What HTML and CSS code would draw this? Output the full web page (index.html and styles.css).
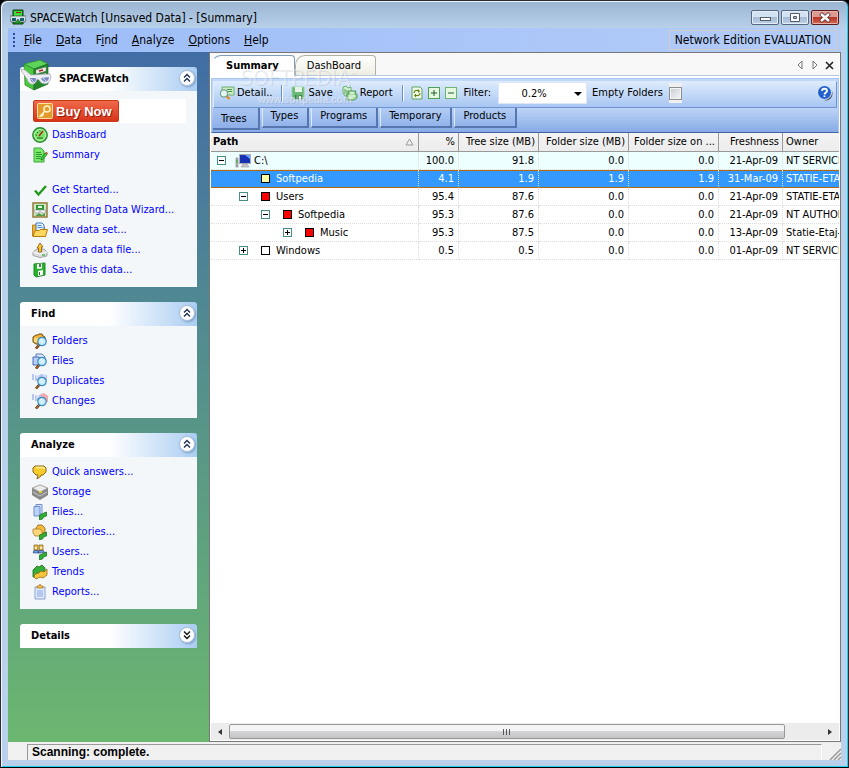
FILE: index.html
```html
<!DOCTYPE html>
<html lang="en">

<head>
    <meta charset="UTF-8">
    <title>SPACEWatch</title>
    <link rel="stylesheet" href="styles.css">
</head>

<body>
    <!-- Icons -->
    <svg class="sprite" xmlns="http://www.w3.org/2000/svg">
        <symbol id="i-app" viewBox="0 0 16 16">
            <path d="M3 1h10v14H3z" fill="#1e9a24" stroke="#083c0a" />
            <path d="M4 2h8v5H4z" fill="#39e03c" />
            <path d="M6 3h5v1H6z" fill="#b01010" />
            <path d="M0 7h16v2l-1 4h-5L8 10l-2 3H1L0 9z" fill="#d6e4e8" stroke="#333" stroke-width=".6" />
            <path d="M2 9h4v3H2zM10 9h4v3h-4z" fill="#12626e" />
        </symbol>
        <symbol id="i-logo" viewBox="0 0 32 32">
            <path d="M4 5l16-4 8 4-14 5z" fill="#5ed45a" stroke="#2a8a2c" stroke-width=".7" />
            <path d="M4 5l10 5v21L5 26z" fill="#4cc93e" stroke="#2a8a2c" stroke-width=".7" />
            <path d="M14 10l14-5v20l-14 6z" fill="#24862a" stroke="#1a6a20" stroke-width=".7" />
            <path d="M16 11l10-3v4l-10 3zM16 17l10-3v4l-10 3z" fill="#eee" stroke="#888" stroke-width=".5" />
            <path d="M19 12l4-1M19 18l4-1" stroke="#c01818" stroke-width="1.500" />
            <path d="M1 10l4 1 6 5 19-1 1 3c-1 8-9 9-12 3l-2-1c-1 7-8 7-10 0L2 13z" fill="#eceef4" stroke="#a0a4b0" stroke-width=".7" />
            <path d="M10 19l6 0c0 6-5 6-6 0zM21 19l8-1c0 6-7 6-8 1z" fill="#7d89c4" />
            <path d="M11 20l3 3M23 19l3 3" stroke="#cfd6f5" />
        </symbol>
        <symbol id="i-key" viewBox="0 0 16 16">
            <rect x=".5" y=".5" width="15" height="15" rx="1" fill="#e39a2c" stroke="#ffe0a0" />
            <circle cx="10" cy="6" r="3" fill="none" stroke="#fff3c8" stroke-width="1.500" />
            <path d="M8 8l-5 5h2l1-1v-1h1" fill="none" stroke="#fff3c8" stroke-width="1.300" />
        </symbol>
        <symbol id="i-gauge" viewBox="0 0 16 16">
            <circle cx="8" cy="8" r="7.200" fill="#7be26a" stroke="#2b8a30" stroke-width="1.400" />
            <circle cx="8" cy="8" r="5.500" fill="#7be26a" stroke="#b8f5aa" />
            <path d="M7 9l4-5" stroke="#b02010" stroke-width="1.300" />
            <path d="M3.500 8h1.500M8 3.500v1M5 5l1 1M5 11h6" stroke="#0f6a1a" />
        </symbol>
        <symbol id="i-note" viewBox="0 0 16 16">
            <path d="M2 1h7l3 3v11H2z" fill="#7ce86a" stroke="#3aa53a" />
            <path d="M4 5.500h5M4 7.500h6M4 9.500h5M4 11.500h4" stroke="#2b9a30" />
            <path d="M9 11l4-5 2 1.500-4 5-2 .5z" fill="#3cc23c" stroke="#1a7a24" stroke-width=".7" />
            <path d="M13 6l1-1 2 1-1 1.500z" fill="#b04a18" />
        </symbol>
        <symbol id="i-check" viewBox="0 0 16 16">
            <path d="M3 8.500l3.500 4L14 4" fill="none" stroke="#229a1c" stroke-width="2.400" />
        </symbol>
        <symbol id="i-wizard" viewBox="0 0 16 16">
            <rect x="1" y="1" width="14" height="14" fill="#cfe6c8" stroke="#9c8240" stroke-width="1.600" />
            <path d="M4 3h8v6H4z" fill="#2f9a34" />
            <path d="M6 4h4v2H6z" fill="#e8f4e8" />
            <path d="M2 8h12l-1 3h-3L8 9l-2 2H3z" fill="#f4f4f8" stroke="#8a8ea0" stroke-width=".6" />
            <path d="M3 14l4-3 3 2 3-2v3z" fill="#5a9a4e" />
        </symbol>
        <symbol id="i-newset" viewBox="0 0 16 16">
            <path d="M.5 3h4l1 2h7v9h-12z" fill="#f3b32e" stroke="#c08418" />
            <path d="M4 1h6l2 2v6H4z" fill="#e6f2ff" stroke="#3f7dbd" />
            <path d="M5.500 3.500h4M5.500 5.500h5" stroke="#4f92d0" />
            <path d="M1 14.500l2-6h4l1-1h7.500l-2 7z" fill="#ffd65e" stroke="#b87a10" />
        </symbol>
        <symbol id="i-opendata" viewBox="0 0 16 16">
            <path d="M1 10l4-3h7l3 3v4l-7 1.500-7-2z" fill="#dcdcdc" stroke="#a4a4a4" />
            <path d="M1 10l7 2 7-2" fill="none" stroke="#fff" />
            <path d="M6.500 10V6H5l3-5 3 4H9.500v5z" fill="#fbc531" stroke="#80560a" stroke-width=".8" />
            <path d="M10 13h3" stroke="#3db13a" stroke-width="1.300" />
        </symbol>
        <symbol id="i-savedata" viewBox="0 0 16 16">
            <path d="M2 2l11-1v12l-9 2-2-2z" fill="#29b32c" stroke="#1c8a22" />
            <path d="M5 2l5-.5v5L5 7z" fill="#f2f7f2" />
            <path d="M8 2v3" stroke="#0d6012" stroke-width="1.500" />
            <path d="M6 9l5-1v5l-5 1z" fill="#fff" />
            <path d="M7.500 10v3" stroke="#1b7a20" />
        </symbol>
        <symbol id="i-lens" viewBox="0 0 16 16">
            <path d="M7.500 11.500L4 15.500" stroke="#5c2c08" stroke-width="2.600" />
            <path d="M7.500 11.500L4 15.500" stroke="#d08a34" stroke-width="1" />
            <circle cx="10" cy="8.500" r="4.200" fill="#c4ecfb" stroke="#3a8cc0" stroke-width="1.200" />
            <path d="M8 7.500l2-1.200M9 10l2.500-2.500" stroke="#fff" />
        </symbol>
        <symbol id="i-findfolder" viewBox="0 0 16 16">
            <path d="M1 4l3-2h2l1-1h3l1 2 2 1v7H4L1 9z" fill="#f2b53a" stroke="#6e4a0c" />
            <path d="M2 5h5v4H2z" fill="#ffd978" />
            <use href="#i-lens" />
        </symbol>
        <symbol id="i-findfile" viewBox="0 0 16 16">
            <path d="M4 1h6l3 3v7H4z" fill="#dce9ff" stroke="#5b7cc0" />
            <path d="M1 4h6l2 2v6H1z" fill="#b7cdf7" stroke="#4a6bb4" />
            <use href="#i-lens" />
        </symbol>
        <symbol id="i-finddup" viewBox="0 0 16 16">
            <path d="M0 1h2v6H0zM3 2l3 1 3-2v7H3zM9 1l6 1v7H9z" fill="#b4c6f1" />
            <path d="M4 4h3M11 3h3" stroke="#e9f0ff" />
            <use href="#i-lens" />
        </symbol>
        <symbol id="i-findchg" viewBox="0 0 16 16">
            <path d="M0 1h2v6H0zM3 2l3 1 3-2v7H3z" fill="#b4c6f1" />
            <path d="M9 1l3-1 4 3v6H9z" fill="#f3a9ad" />
            <path d="M4 4h3" stroke="#e9f0ff" />
            <use href="#i-lens" />
        </symbol>
        <symbol id="i-bubble" viewBox="0 0 16 16">
            <path d="M3 2h9l2 2v4l-3 3H9v1l-4 3 1-4H4L1 8V4z" fill="#f8cb2c" stroke="#8c6814" />
            <path d="M4 3.500h7l2 1.500" fill="none" stroke="#fff0a0" stroke-width="1.500" />
        </symbol>
        <symbol id="i-storage" viewBox="0 0 16 16">
            <path d="M.5 4L8 1l7.500 3v7L8 15.500.5 11z" fill="#8a8a8a" stroke="#6c6c6c" stroke-width=".7" />
            <path d="M.5 4L8 1l7.500 3L8 8z" fill="#ececec" stroke="#aaa" stroke-width=".7" />
            <path d="M1 8l7 4 7-4" fill="none" stroke="#c8c8c8" />
            <path d="M7 7h3v2H7z" fill="#d4d820" />
        </symbol>
        <symbol id="i-chart" viewBox="0 0 16 16">
            <path d="M7.500 11l3-1 1-1 3-1v4l-3 1-1 2-3 1z" fill="#2fae2f" stroke="#166a1c" stroke-width=".7" />
        </symbol>
        <symbol id="i-files" viewBox="0 0 16 16">
            <path d="M4 .5h6V10H4z" fill="#d8e6ff" stroke="#6f8dcc" />
            <path d="M2 2.500h6V12H2z" fill="#bcd2fb" stroke="#6f8dcc" />
            <use href="#i-chart" />
        </symbol>
        <symbol id="i-dirs" viewBox="0 0 16 16">
            <path d="M4 4l2-3h4l3 3v5H4z" fill="#f5b93c" stroke="#8d6416" stroke-width=".8" />
            <path d="M1 5h7l2 2v5H3L1 9z" fill="#ffd778" stroke="#a8782a" stroke-width=".8" />
            <use href="#i-chart" />
        </symbol>
        <symbol id="i-users" viewBox="0 0 16 16">
            <path d="M1 9l1-3h4l1 3zM6 9l1-3h4l2 3z" fill="#6d95dd" stroke="#33497c" stroke-width=".6" />
            <path d="M2 1h4v5H2zM7 1h4v5H7z" fill="#f0c34c" stroke="#6d4a0c" stroke-width=".6" />
            <path d="M3 3h2v2H3zM8 3h2v2H8z" fill="#ffe9b8" />
            <use href="#i-chart" />
        </symbol>
        <symbol id="i-trends" viewBox="0 0 16 16">
            <path d="M1 6l4-4 2 1 3-2 3 3v6l-6 2-6 1z" fill="#35ad36" stroke="#176a1e" stroke-width=".8" />
            <path d="M3 10l4-1 2-2 3 1 3-3v6l-4 3-3-1-4 2-2-2z" fill="#f6c53c" stroke="#94690f" stroke-width=".8" />
        </symbol>
        <symbol id="i-reports" viewBox="0 0 16 16">
            <path d="M3 3h10v12H3z" fill="#dfe9fb" stroke="#8ba2d2" />
            <path d="M5 6h6v7H5z" fill="#b3c8f0" />
            <path d="M5 4V2h2l1-2 1 2h2v2z" fill="#f7c33e" stroke="#94650c" stroke-width=".6" />
        </symbol>
        <symbol id="i-detail" viewBox="0 0 16 16">
            <path d="M3 2h12v8H3z" fill="#cbe9c5" stroke="#6db070" />
            <path d="M8 4.500h5M8 6.500h5" stroke="#459a52" />
            <path d="M7.500 11l3 3" stroke="#e08a1c" stroke-width="2.400" />
            <circle cx="5" cy="8.500" r="3.700" fill="#e4f6f2" stroke="#5e8e78" />
        </symbol>
        <symbol id="i-save" viewBox="0 0 16 16">
            <path d="M2 2h12v12H4l-2-2z" fill="#67b974" stroke="#9bd0a2" />
            <path d="M5 2h7v5H5z" fill="#e8f3e8" />
            <path d="M5 10h7v4H5z" fill="#2e7e42" />
            <path d="M9 11h2v3H9z" fill="#fff" />
        </symbol>
        <symbol id="i-report" viewBox="0 0 16 16">
            <path d="M1 2l3-1 2 2 3-1v8l-6 1-2-3z" fill="#d4efcf" stroke="#6ab070" />
            <path d="M3 4v5M5 5v5" stroke="#4f9c56" />
            <path d="M6 6h8l-1 3h2v4l-3 2H5V9h2z" fill="#a6dba0" stroke="#559a5c" />
            <path d="M8 8h4M7 11h6M7 13h4" stroke="#fff" />
        </symbol>
        <symbol id="i-refresh" viewBox="0 0 12 14">
            <path d="M1 1h8l2 2v10H1z" fill="#edfbe8" stroke="#5da564" />
            <path d="M3 7c0-3 3-3 5-2M9 7c0 3-3 3-5 2" fill="none" stroke="#6a7d15" stroke-width="1.200" />
            <path d="M7 3l2 2-2 2zM5 7.500l-2 2 2 2z" fill="#6a7d15" />
        </symbol>
        <symbol id="i-expand" viewBox="0 0 12 12">
            <rect x=".5" y=".5" width="11" height="11" fill="#e6f8e0" stroke="#4da255" />
            <path d="M3 6h6M6 3v6" stroke="#1f5e2c" />
        </symbol>
        <symbol id="i-shrink" viewBox="0 0 12 12">
            <rect x=".5" y=".5" width="11" height="11" fill="#e6f8e0" stroke="#6cb573" />
            <path d="M3 6h6" stroke="#1f5e2c" />
        </symbol>
        <symbol id="i-help" viewBox="0 0 16 16">
            <circle cx="9" cy="9" r="6.500" fill="#444a5a" />
            <circle cx="7.500" cy="7.500" r="7" fill="#2260d0" stroke="#eaf2ff" />
            <path d="M5 6c0-3 5-3 5 0 0 1.500-2.500 1.500-2.500 3.500M7.500 10.500v1.500" fill="none" stroke="#fff" stroke-width="1.800" />
        </symbol>
        <symbol id="i-pc" viewBox="0 0 16 14">
            <path d="M1 4h2v9H1z" fill="#b4b8b8" stroke="#888" stroke-width=".7" />
            <path d="M2 6v3" stroke="#35b135" />
            <rect x="4.500" y=".5" width="11" height="9" fill="#1733b4" stroke="#a9adb8" />
            <path d="M10 1h5v4z" fill="#6fa2ff" />
            <path d="M8 10h4l2 3H6z" fill="#c8c8c8" stroke="#999" stroke-width=".6" />
        </symbol>
        <symbol id="i-up" viewBox="0 0 16 16">
            <circle cx="8" cy="8" r="7.500" fill="#fff" stroke="#a9bbd3" />
            <path d="M5 7.500l3-3 3 3M5 11.500l3-3 3 3" fill="none" stroke="#1d3050" stroke-width="1.400" />
        </symbol>
        <symbol id="i-down" viewBox="0 0 16 16">
            <circle cx="8" cy="8" r="7.500" fill="#fff" stroke="#a9bbd3" />
            <path d="M5 4.500l3 3 3-3M5 8.500l3 3 3-3" fill="none" stroke="#111" stroke-width="1.400" />
        </symbol>
    </svg>

    <div class="window">
        <!-- Title bar -->
        <header class="titlebar">
            <svg class="icon"><use href="#i-app" /></svg>
            <span class="title">SPACEWatch [Unsaved Data] - [Summary]</span>
            <div class="window-buttons">
                <button aria-label="Minimize"><svg viewBox="0 0 26 13"><rect x="8.500" y="6.500" width="10" height="3" fill="#fff" stroke="#555d6b" /></svg></button>
                <button aria-label="Maximize"><svg viewBox="0 0 26 13"><path d="M8.500 2.500h9v8h-9zM11.500 5.500h3v2h-3z" fill="#fff" fill-rule="evenodd" stroke="#555d6b" /></svg></button>
                <button class="close" aria-label="Close"><svg viewBox="0 0 26 13"><path d="M8.500 2.500l9 8M17.500 2.500l-9 8" stroke="#5a3030" stroke-width="4" /><path d="M9 3l8 7M17 3l-8 7" stroke="#fff" stroke-width="2.500" /></svg></button>
            </div>
        </header>

        <!-- Menu -->
        <nav class="menubar">
            <span class="grip"></span>
            <button><u>F</u>ile</button>
            <button><u>D</u>ata</button>
            <button>F<u>i</u>nd</button>
            <button><u>A</u>nalyze</button>
            <button><u>O</u>ptions</button>
            <button><u>H</u>elp</button>
            <span class="edition">Network Edition EVALUATION</span>
        </nav>

        <div class="content">
            <!-- Task panes -->
            <aside class="sidebar">
                <section class="panel">
                    <div class="panel-head with-logo">
                        <svg class="logo"><use href="#i-logo" /></svg>
                        <h2>SPACEWatch</h2>
                        <button aria-label="Collapse SPACEWatch"><svg class="icon"><use href="#i-up" /></svg></button>
                    </div>
                    <div class="panel-body first">
                        <div class="buy"><button><svg class="icon"><use href="#i-key" /></svg>Buy Now</button></div>
                        <ul>
                            <li><a href="#"><svg class="icon"><use href="#i-gauge" /></svg>DashBoard</a></li>
                            <li><a href="#"><svg class="icon"><use href="#i-note" /></svg>Summary</a></li>
                        </ul>
                        <ul class="spaced">
                            <li><a href="#"><svg class="icon"><use href="#i-check" /></svg>Get Started...</a></li>
                            <li><a href="#"><svg class="icon"><use href="#i-wizard" /></svg>Collecting Data Wizard...</a></li>
                            <li><a href="#"><svg class="icon"><use href="#i-newset" /></svg>New data set...</a></li>
                            <li><a href="#"><svg class="icon"><use href="#i-opendata" /></svg>Open a data file...</a></li>
                            <li><a href="#"><svg class="icon"><use href="#i-savedata" /></svg>Save this data...</a></li>
                        </ul>
                    </div>
                </section>

                <section class="panel">
                    <div class="panel-head">
                        <h2>Find</h2>
                        <button aria-label="Collapse Find"><svg class="icon"><use href="#i-up" /></svg></button>
                    </div>
                    <div class="panel-body">
                        <ul>
                            <li><a href="#"><svg class="icon"><use href="#i-findfolder" /></svg>Folders</a></li>
                            <li><a href="#"><svg class="icon"><use href="#i-findfile" /></svg>Files</a></li>
                            <li><a href="#"><svg class="icon"><use href="#i-finddup" /></svg>Duplicates</a></li>
                            <li><a href="#"><svg class="icon"><use href="#i-findchg" /></svg>Changes</a></li>
                        </ul>
                    </div>
                </section>

                <section class="panel">
                    <div class="panel-head">
                        <h2>Analyze</h2>
                        <button aria-label="Collapse Analyze"><svg class="icon"><use href="#i-up" /></svg></button>
                    </div>
                    <div class="panel-body">
                        <ul>
                            <li><a href="#"><svg class="icon"><use href="#i-bubble" /></svg>Quick answers...</a></li>
                            <li><a href="#"><svg class="icon"><use href="#i-storage" /></svg>Storage</a></li>
                            <li><a href="#"><svg class="icon"><use href="#i-files" /></svg>Files...</a></li>
                            <li><a href="#"><svg class="icon"><use href="#i-dirs" /></svg>Directories...</a></li>
                            <li><a href="#"><svg class="icon"><use href="#i-users" /></svg>Users...</a></li>
                            <li><a href="#"><svg class="icon"><use href="#i-trends" /></svg>Trends</a></li>
                            <li><a href="#"><svg class="icon"><use href="#i-reports" /></svg>Reports...</a></li>
                        </ul>
                    </div>
                </section>

                <section class="panel">
                    <div class="panel-head">
                        <h2>Details</h2>
                        <button aria-label="Expand Details"><svg class="icon"><use href="#i-down" /></svg></button>
                    </div>
                </section>
            </aside>

            <!-- Document area -->
            <main class="document">
                <div class="tabs">
                    <button class="tab active">Summary</button>
                    <button class="tab">DashBoard</button>
                    <div class="tab-nav">
                        <button aria-label="Previous tab"><svg viewBox="0 0 10 10"><path d="M7 1v8L3 5z" fill="none" stroke="#777" /></svg></button>
                        <button aria-label="Next tab"><svg viewBox="0 0 10 10"><path d="M3 1v8l4-4z" fill="none" stroke="#777" /></svg></button>
                        <button aria-label="Close tab"><svg viewBox="0 0 10 10"><path d="M1 2l7 7M8 2L1 9" stroke="#222" stroke-width="1.600" /></svg></button>
                    </div>
                </div>

                <div class="tools">
                    <div class="toolbar">
                        <button><svg class="icon"><use href="#i-detail" /></svg>Detail..</button>
                        <span class="sep"></span>
                        <button><svg class="icon"><use href="#i-save" /></svg>Save</button>
                        <button><svg class="icon"><use href="#i-report" /></svg>Report</button>
                        <span class="sep"></span>
                        <div class="small-buttons">
                            <button aria-label="Refresh"><svg class="page"><use href="#i-refresh" /></svg></button>
                            <button aria-label="Expand all"><svg><use href="#i-expand" /></svg></button>
                            <button aria-label="Collapse all"><svg><use href="#i-shrink" /></svg></button>
                        </div>
                        <label for="filter">Filter:</label>
                        <span class="combo">
                            <select id="filter">
                                <option>0.2%</option>
                            </select>
                        </span>
                        <label for="empty">Empty Folders</label>
                        <span class="check"><input type="checkbox" id="empty"></span>
                        <button class="help" aria-label="Help"><svg class="icon"><use href="#i-help" /></svg></button>
                    </div>
                    <div class="subtabs">
                        <button class="active">Trees</button>
                        <button>Types</button>
                        <button>Programs</button>
                        <button>Temporary</button>
                        <button>Products</button>
                    </div>
                    <div class="watermark" aria-hidden="true">
                        <span class="mark-name">SOFTPEDIA<sup>™</sup></span>
                        <span class="mark-url">www.softpedia.com</span>
                    </div>
                </div>

                <div class="grid">
                    <table>
                        <colgroup>
                            <col>
                            <col class="w-percent">
                            <col class="w-tree">
                            <col class="w-folder">
                            <col class="w-folder">
                            <col class="w-fresh">
                            <col class="w-owner">
                        </colgroup>
                        <thead>
                            <tr>
                                <th class="path"><div class="path-head">Path<svg viewBox="0 0 9 8"><path d="M1 7l3.500-6L8 7z" fill="none" stroke="#999" /></svg></div></th>
                                <th>%</th>
                                <th>Tree size (MB)</th>
                                <th>Folder size (MB)</th>
                                <th>Folder size on ...</th>
                                <th>Freshness</th>
                                <th class="owner">Owner</th>
                            </tr>
                        </thead>
                        <tbody>
                            <tr class="root">
                                <td class="path"><div class="node"><button class="toggle minus" aria-label="Collapse"></button><svg class="drive"><use href="#i-pc" /></svg>C:\</div></td>
                                <td>100.0</td>
                                <td>91.8</td>
                                <td>0.0</td>
                                <td>0.0</td>
                                <td>21-Apr-09</td>
                                <td class="owner">NT SERVICE</td>
                            </tr>
                            <tr class="selected">
                                <td class="path"><div class="node level-1"><span class="toggle-space"></span><span class="box cream"></span>Softpedia</div></td>
                                <td>4.1</td>
                                <td>1.9</td>
                                <td>1.9</td>
                                <td>1.9</td>
                                <td>31-Mar-09</td>
                                <td class="owner">STATIE-ETAJ</td>
                            </tr>
                            <tr>
                                <td class="path"><div class="node level-1"><button class="toggle minus" aria-label="Collapse"></button><span class="box red"></span>Users</div></td>
                                <td>95.4</td>
                                <td>87.6</td>
                                <td>0.0</td>
                                <td>0.0</td>
                                <td>21-Apr-09</td>
                                <td class="owner">STATIE-ETAJ</td>
                            </tr>
                            <tr>
                                <td class="path"><div class="node level-2"><button class="toggle minus" aria-label="Collapse"></button><span class="box red"></span>Softpedia</div></td>
                                <td>95.3</td>
                                <td>87.6</td>
                                <td>0.0</td>
                                <td>0.0</td>
                                <td>21-Apr-09</td>
                                <td class="owner">NT AUTHORITY</td>
                            </tr>
                            <tr>
                                <td class="path"><div class="node level-3"><button class="toggle plus" aria-label="Expand"></button><span class="box red"></span>Music</div></td>
                                <td>95.3</td>
                                <td>87.5</td>
                                <td>0.0</td>
                                <td>0.0</td>
                                <td>13-Apr-09</td>
                                <td class="owner">Statie-Etaj-1</td>
                            </tr>
                            <tr>
                                <td class="path"><div class="node level-1"><button class="toggle plus" aria-label="Expand"></button><span class="box"></span>Windows</div></td>
                                <td>0.5</td>
                                <td>0.5</td>
                                <td>0.0</td>
                                <td>0.0</td>
                                <td>01-Apr-09</td>
                                <td class="owner">NT SERVICE</td>
                            </tr>
                        </tbody>
                    </table>
                </div>

                <div class="scrollbar">
                    <button aria-label="Scroll left"><svg viewBox="0 0 8 8"><path d="M6 1v6L2 4z" fill="#333" /></svg></button>
                    <div class="track"><div class="thumb"></div></div>
                    <button aria-label="Scroll right"><svg viewBox="0 0 8 8"><path d="M2 1v6l4-3z" fill="#333" /></svg></button>
                </div>
            </main>
        </div>

        <!-- Status bar -->
        <footer class="statusbar">
            <span class="status">Scanning: complete.</span>
            <svg class="resize" viewBox="0 0 12 12"><path d="M1 12L12 1M5 12l7-7M9 12l3-3" stroke="#999" stroke-width="1.500" /></svg>
        </footer>
    </div>
</body>

</html>
```

FILE: styles.css
```css
* {
    box-sizing: border-box;
}

body {
    margin: 0;
    background: #000;
    color: #000;
    font-family: "DejaVu Sans Condensed", "DejaVu Sans", Tahoma, sans-serif;
    font-size: 11px;
    line-height: 16px;
}

button {
    padding: 0;
    border: none;
    background: none;
    color: inherit;
    font: inherit;
    white-space: nowrap;
}

ul {
    list-style: none;
    margin: 0;
    padding: 0;
}

svg {
    display: block;
    flex: none;
}

.sprite {
    display: none;
}

.icon {
    width: 16px;
    height: 16px;
}

/* Window frame */
.window {
    display: flex;
    flex-direction: column;
    height: 100vh;
    padding: 0 7px 7px 6px;
    border: 1px solid #2a2a33;
    border-bottom-color: #000;
    border-radius: 7px 7px 0 0;
    background: linear-gradient(#9ab4d2, #b9d1ea 28px);
    box-shadow: inset 1px 1px #f0f8ff, inset -1px -1px #1fd0ee;
}

.titlebar {
    display: flex;
    align-items: center;
    gap: 4px;
    height: 27px;
    padding: 5px 2px 0 3px;
    font-size: 12px;
}

.title {
    padding-top: 1px;
}

.window-buttons {
    display: flex;
    gap: 2px;
    margin-left: auto;
}

.window-buttons button {
    width: 28px;
    height: 15px;
    border: 1px solid #56677e;
    border-radius: 2px;
    background: linear-gradient(#d3e2f2 45%, #a6bcd5 50%, #bdd2e8);
    box-shadow: inset 0 0 0 1px #e4eefa;
}

.window-buttons .close {
    border-color: #5a1c20;
    background: linear-gradient(#dc9a90 45%, #b8372a 50%, #d2694f);
    box-shadow: inset 0 0 0 1px #e8b0a8;
}

/* Menu */
.menubar {
    display: flex;
    align-items: center;
    gap: 14px;
    height: 24px;
    margin-left: 1px;
    padding: 0 4px 0 5px;
    background: linear-gradient(90deg, #9dbdf8, #b4ccf8);
    font-size: 12px;
}

.grip {
    width: 2px;
    height: 14px;
    margin-right: -5px;
    background: repeating-linear-gradient(#2c4a94 0 2px, transparent 2px 4px);
}

.edition {
    margin-left: auto;
    padding: 1px 5px;
    border: 1px solid #cfcdc6;
    white-space: nowrap;
}

.content {
    display: flex;
    flex: 1;
    min-height: 0;
    margin-left: 1px;
}

/* Task panes */
.sidebar {
    display: flex;
    flex-direction: column;
    flex: none;
    gap: 15px;
    width: 201px;
    padding: 15px 12px;
    background: linear-gradient(#416da5, #4f8793 35%, #6bb76f);
}

.panel-head {
    display: flex;
    align-items: center;
    justify-content: space-between;
    height: 24px;
    padding: 0 2px 2px 11px;
    border-radius: 3px 3px 0 0;
    background: linear-gradient(90deg, #fff 50%, #aacdf2);
}

.panel-head button {
    border-radius: 50%;
    box-shadow: 1px 1px 2px #7c9cc4;
}

.with-logo {
    justify-content: flex-start;
    gap: 7px;
    padding-left: 0;
}

.with-logo button {
    margin-left: auto;
}

.logo {
    width: 32px;
    height: 32px;
    margin-top: -6px;
}

h2 {
    margin: 0;
    padding-top: 1px;
    font-size: 11px;
}

.panel-body {
    padding: 5px 11px 7px 12px;
    background: #f4f7fa;
}

.first {
    padding-top: 8px;
}

.spaced {
    margin-top: 15px;
}

.panel-body a {
    display: flex;
    align-items: center;
    gap: 4px;
    height: 20px;
    color: #00f;
    text-decoration: none;
    white-space: nowrap;
}

.buy {
    height: 24px;
    margin: 0 0 2px 1px;
    padding: 1px 0;
    background: #fff;
}

.buy button {
    display: flex;
    align-items: center;
    gap: 3px;
    height: 22px;
    padding: 0 6px 0 3px;
    border: 1px solid #c43a18;
    border-radius: 2px;
    background: linear-gradient(#f0694a, #d8351a);
    color: #fff;
    font: bold 13px "Liberation Sans", Arial, sans-serif;
    text-shadow: 1px 1px #9c1c08;
}

/* Document area */
.document {
    display: flex;
    flex-direction: column;
    flex: 1;
    min-width: 0;
    padding: 0 1px 1px;
    border: 1px solid #777;
    background: #fff;
}

.tabs {
    display: flex;
    align-items: flex-end;
    height: 23px;
    background: #f8f8f8;
    border-bottom: 1px solid #b8c8dc;
}

.tab {
    height: 20px;
    padding: 0 14px 0 11px;
    border: 1px solid #b0b0a4;
    border-bottom: none;
    border-radius: 10px 4px 0 0;
    background: linear-gradient(#fff, #eeede2);
}

.tab.active {
    height: 21px;
    margin-bottom: -1px;
    padding: 0 15px 0 14px;
    border-color: #7f9db9;
    border-left-color: transparent;
    background: #fff;
    font-weight: bold;
}

.tab-nav {
    display: flex;
    gap: 5px;
    margin-left: auto;
    padding: 0 4px 5px 0;
}

.tab-nav svg {
    width: 10px;
    height: 10px;
}

.tools {
    position: relative;
    margin-top: 2px;
    padding: 2px 1px 2px 1px;
    border: 1px solid #a9c6f4;
    border-bottom-color: #3f62a8;
    background: linear-gradient(#c2d8f8, #c2d8f8 50%, #87abe6);
}

.toolbar {
    display: flex;
    align-items: center;
    height: 27px;
    padding: 0 3px 3px 5px;
    border: 1px solid #dcebff;
    border-right-color: #6f93cf;
    border-bottom-color: #6f93cf;
    background: linear-gradient(#dcebfd, #a8c6f2);
}

.toolbar > button {
    display: flex;
    align-items: center;
    gap: 2px;
    margin-right: 9px;
}

.sep {
    width: 2px;
    height: 16px;
    margin-right: 7px;
    border-left: 1px solid #6a8ccb;
    border-right: 1px solid #fff;
}

.small-buttons {
    display: flex;
    align-items: center;
    gap: 5px;
    margin-right: 7px;
}

.small-buttons svg {
    width: 12px;
    height: 12px;
}

.small-buttons .page {
    height: 14px;
}

.combo {
    position: relative;
    margin: 0 5px 0 7px;
}

.combo::after {
    content: "";
    position: absolute;
    top: 10px;
    right: 5px;
    border: 4px solid transparent;
    border-top-color: #000;
    pointer-events: none;
}

select {
    display: block;
    width: 89px;
    height: 22px;
    padding: 2px 17px 0 0;
    border: 1px solid #dde6f4;
    border-radius: 0;
    background: #fff;
    color: #000;
    font: inherit;
    text-align: center;
    text-align-last: center;
    appearance: none;
}

.check {
    display: flex;
    align-items: center;
    height: 20px;
    margin-left: 6px;
    background: #f0f0f0;
}

.check input {
    width: 13px;
    height: 13px;
    margin: 0;
    border: 1px solid #8e8f8f;
    background: linear-gradient(135deg, #c8cdd4, #f6f6f6);
    box-shadow: inset 0 0 0 1px #f4f4f4;
    appearance: none;
}

.toolbar .help {
    margin: 0 0 0 auto;
}

.subtabs {
    display: flex;
    align-items: flex-start;
    gap: 2px;
    height: 22px;
}

.subtabs button {
    height: 20px;
    padding: 0 9px 2px 8px;
    border-right: 2px solid #5676b0;
    border-bottom: 2px solid #5676b0;
    border-left: 1px solid #dce9fc;
    background: linear-gradient(#b2cdf5, #92b2ea);
}

.subtabs .active {
    height: 22px;
    padding: 1px 11px 0 8px;
    border-left: none;
    background: linear-gradient(#a8c5f2, #8fafe8);
}

.watermark {
    position: absolute;
    top: -13px;
    left: 28px;
    display: flex;
    flex-direction: column;
    gap: 4px;
    color: rgba(255, 255, 255, 0.4);
    text-shadow: 1px 1px rgba(120, 130, 150, 0.2);
    pointer-events: none;
}

.mark-name {
    font-size: 22px;
    line-height: 24px;
}

.mark-name sup {
    font-size: 7px;
    line-height: 7px;
}

.mark-url {
    padding-left: 18px;
    font: bold 10px/12px "Liberation Sans", Arial, sans-serif;
}

/* Tree grid */
.grid {
    flex: 1;
    min-height: 0;
    overflow: hidden;
}

table {
    width: 100%;
    table-layout: fixed;
    border-collapse: separate;
    border-spacing: 0;
}

.w-percent {
    width: 40px;
}

.w-tree {
    width: 80px;
}

.w-folder {
    width: 90px;
}

.w-fresh {
    width: 64px;
}

.w-owner {
    width: 56px;
}

th,
td {
    height: 18px;
    padding: 0 4px 0 0;
    line-height: 16px;
    text-align: right;
    white-space: nowrap;
    overflow: hidden;
}

th {
    height: 19px;
    padding-right: 3px;
    border-right: 1px solid #999;
    border-bottom: 1px solid #999;
    background: linear-gradient(#f4f4f4, #ececec);
    font-weight: normal;
}

td {
    border-right: 1px dotted #ddd;
    border-bottom: 1px dotted #ddd;
}

th.path {
    padding-left: 2px;
    font-weight: bold;
}

th.owner,
td.owner {
    padding: 0 0 0 3px;
    border-right: none;
    text-align: left;
}

.path-head {
    display: flex;
    align-items: center;
    justify-content: space-between;
    padding-right: 1px;
}

.path-head svg {
    width: 9px;
    height: 8px;
}

.root td {
    background: #edffff;
}

.selected td {
    border-bottom: 1px solid #b8660c;
    background: #3399ff;
    box-shadow: inset 0 1px #b8660c;
    color: #fff;
}

.node {
    display: flex;
    align-items: center;
    height: 16px;
    padding-left: 6px;
}

.level-1 {
    padding-left: 28px;
}

.level-2 {
    padding-left: 50px;
}

.level-3 {
    padding-left: 72px;
}

.toggle,
.toggle-space {
    flex: none;
    width: 9px;
    height: 9px;
}

.toggle {
    border: 1px solid #4a8c86;
}

.minus {
    background: linear-gradient(#000, #000) center / 5px 1px no-repeat #fff;
}

.plus {
    background: linear-gradient(#000, #000) center / 5px 1px no-repeat, linear-gradient(#000, #000) center / 1px 5px no-repeat #fff;
}

.drive {
    width: 16px;
    height: 14px;
    margin: 0 3px 0 9px;
}

.box {
    flex: none;
    width: 9px;
    height: 9px;
    margin: 0 6px 0 13px;
    border: 1px solid #000;
    background: #fff;
}

.red {
    background: #f00;
}

.cream {
    background: #ffffa8;
}

/* Scrollbar */
.scrollbar {
    display: flex;
    height: 17px;
    background: #ececec;
}

.scrollbar button {
    display: flex;
    align-items: center;
    justify-content: center;
    width: 18px;
}

.scrollbar svg {
    width: 8px;
    height: 8px;
}

.track {
    flex: 1;
    padding: 1px 0;
}

.thumb {
    width: 94%;
    height: 15px;
    border: 1px solid #989898;
    border-radius: 2px;
    background:
        repeating-linear-gradient(90deg, #555 0 1px, transparent 1px 3px) center / 8px 6px no-repeat,
        linear-gradient(#f4f4f4 45%, #d4d4d6 50%, #c4c4c8);
}

/* Status bar */
.statusbar {
    display: flex;
    justify-content: space-between;
    height: 18px;
    margin-left: 1px;
    padding-top: 2px;
    background: #f0f0f0;
}

.status {
    flex: 1;
    margin: 0 7px 0 19px;
    padding-left: 4px;
    border-top: 1px solid #999;
    border-left: 1px solid #999;
    border-right: 1px solid #fff;
    font: bold 12px/15px "Liberation Sans", Arial, sans-serif;
}

.resize {
    align-self: flex-end;
    width: 12px;
    height: 12px;
}
```
